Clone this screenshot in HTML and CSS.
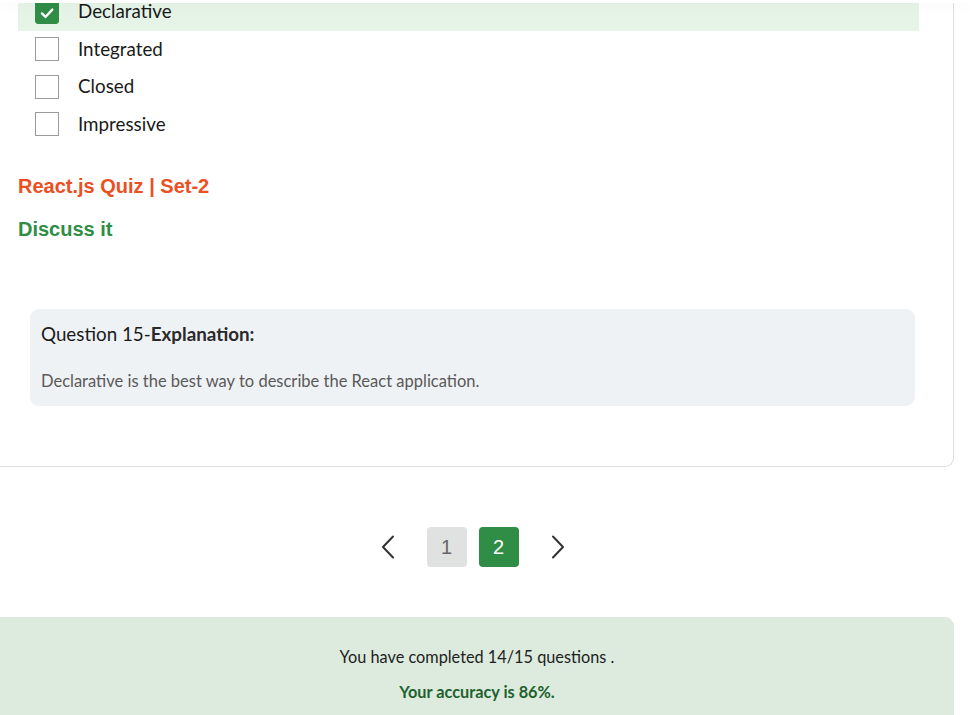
FILE: index.html
```html
<!DOCTYPE html>
<html lang="en">
<head>
<meta charset="utf-8">
<title>Quiz</title>
<link rel="stylesheet" href="styles.css">
</head>
<body>
<div class="topbar"></div>
<main class="page">
  <section class="card">
    <ul class="options">
      <li class="option selected">
        <span class="box checked">
          <svg viewBox="0 0 24 24" width="24" height="24"><path d="M6.5 12.5l3.8 3.8 7.5-8" fill="none" stroke="#fff" stroke-width="2.6" stroke-linecap="round" stroke-linejoin="round"/></svg>
        </span>
        <span class="label">Declarative</span>
      </li>
      <li class="option"><span class="box"></span><span class="label">Integrated</span></li>
      <li class="option"><span class="box"></span><span class="label">Closed</span></li>
      <li class="option"><span class="box"></span><span class="label">Impressive</span></li>
    </ul>
    <a class="quiz-link" href="#">React.js Quiz | Set-2</a>
    <a class="discuss-link" href="#">Discuss it</a>
    <div class="explanation">
      <h3 class="exp-title">Question 15-<b>Explanation:</b></h3>
      <p class="exp-text">Declarative is the best way to describe the React application.</p>
    </div>
  </section>

  <nav class="pager">
    <button class="nav-btn" aria-label="Previous">
      <svg viewBox="0 0 16 24" width="16" height="24"><path d="M13 1.5L3 12l10 10.5" fill="none" stroke="#333" stroke-width="2" stroke-linecap="round" stroke-linejoin="round"/></svg>
    </button>
    <button class="page-btn">1</button>
    <button class="page-btn active">2</button>
    <button class="nav-btn" aria-label="Next">
      <svg viewBox="0 0 16 24" width="16" height="24"><path d="M3 1.5L13 12 3 22.5" fill="none" stroke="#333" stroke-width="2" stroke-linecap="round" stroke-linejoin="round"/></svg>
    </button>
  </nav>

  <section class="summary">
    <p class="completed">You have completed 14/15 questions .</p>
    <p class="accuracy">Your accuracy is 86%.</p>
  </section>
</main>
</body>
</html>
```
FILE: styles.css
```css
* { box-sizing: border-box; }
html, body { margin: 0; padding: 0; background: #fff; }
body {
  font-family: Lato, "Open Sans", "Noto Sans", sans-serif;
  color: #222;
  overflow: hidden;
  height: 715px;
}
.topbar {
  position: absolute;
  top: 0; left: 0; right: 0;
  height: 3px;
  background: #fff;
  box-shadow: 0 2px 14px rgba(0,0,0,0.07);
  z-index: 5;
}
.page {
  width: 970px;
}
.card {
  margin: -7px 16px 0 -10px;
  border: 1px solid #dedede;
  border-top: none;
  border-radius: 0 0 9px 9px;
  padding: 0 34px 60px 27px;
}
.options {
  list-style: none;
  margin: 0;
  padding: 0;
}
.option {
  height: 37.5px;
  display: flex;
  align-items: center;
  padding-left: 17px;
  gap: 19px;
}
.option.selected { background: #e6f4e8; }
.box {
  width: 24px;
  height: 24px;
  border: 1px solid #9a9a9a;
  background: #fff;
  flex: none;
  display: flex;
}
.box.checked {
  background: #2f8d46;
  border-color: #2f8d46;
  border-radius: 3px;
}
.label {
  font-size: 18.8px;
  color: #1a1a1a;
  line-height: 24px;
  margin-top: -1px;
}
.quiz-link, .discuss-link {
  display: block;
  font-family: "Liberation Sans", Arial, sans-serif;
  font-weight: bold;
  font-size: 20px;
  line-height: 24px;
  text-decoration: none;
}
.quiz-link { color: #ec4f22; margin-top: 31px; }
.discuss-link { color: #2f8d46; margin-top: 19px; }
.explanation {
  margin: 68px 4px 0 12px;
  background: #eff2f5;
  border-radius: 9px;
  padding: 13px 11px 14px;
}
.exp-title {
  margin: 0;
  font-size: 18.8px;
  font-weight: normal;
  line-height: 24px;
  color: #1a1a1a;
}
.exp-title b { font-weight: bold; color: #2a2a2a; }
.exp-text {
  margin: 24px 0 0;
  font-size: 16.5px;
  line-height: 22px;
  color: #595959;
}
.pager {
  display: flex;
  justify-content: center;
  align-items: center;
  gap: 12px;
  margin: 60px 25px 0 0;
  height: 40px;
}
.pager button {
  font-family: "Liberation Sans", Arial, sans-serif;
  border: none;
  padding: 0;
  cursor: pointer;
}
.nav-btn {
  width: 34px;
  height: 34px;
  background: #fff;
  border-radius: 6px;
  display: flex;
  align-items: center;
  justify-content: center;
  margin: 0 10px;
}
.page-btn {
  width: 40px;
  height: 40px;
  border-radius: 4px;
  background: #e0e1e1;
  color: #666;
  font-size: 20px;
}
.page-btn.active {
  background: #2f8d46;
  color: #fff;
}
.summary {
  margin: 50px 16px 0 0;
  background: #dcebdd;
  border-radius: 0 9px 0 0;
  height: 120px;
  padding-top: 29px;
  text-align: center;
}
.summary p { margin: 0; font-size: 16.3px; line-height: 22px; }
.completed { color: #1e1e1e; }
.accuracy { color: #22612f; font-weight: bold; margin-top: 13px !important; }
```
